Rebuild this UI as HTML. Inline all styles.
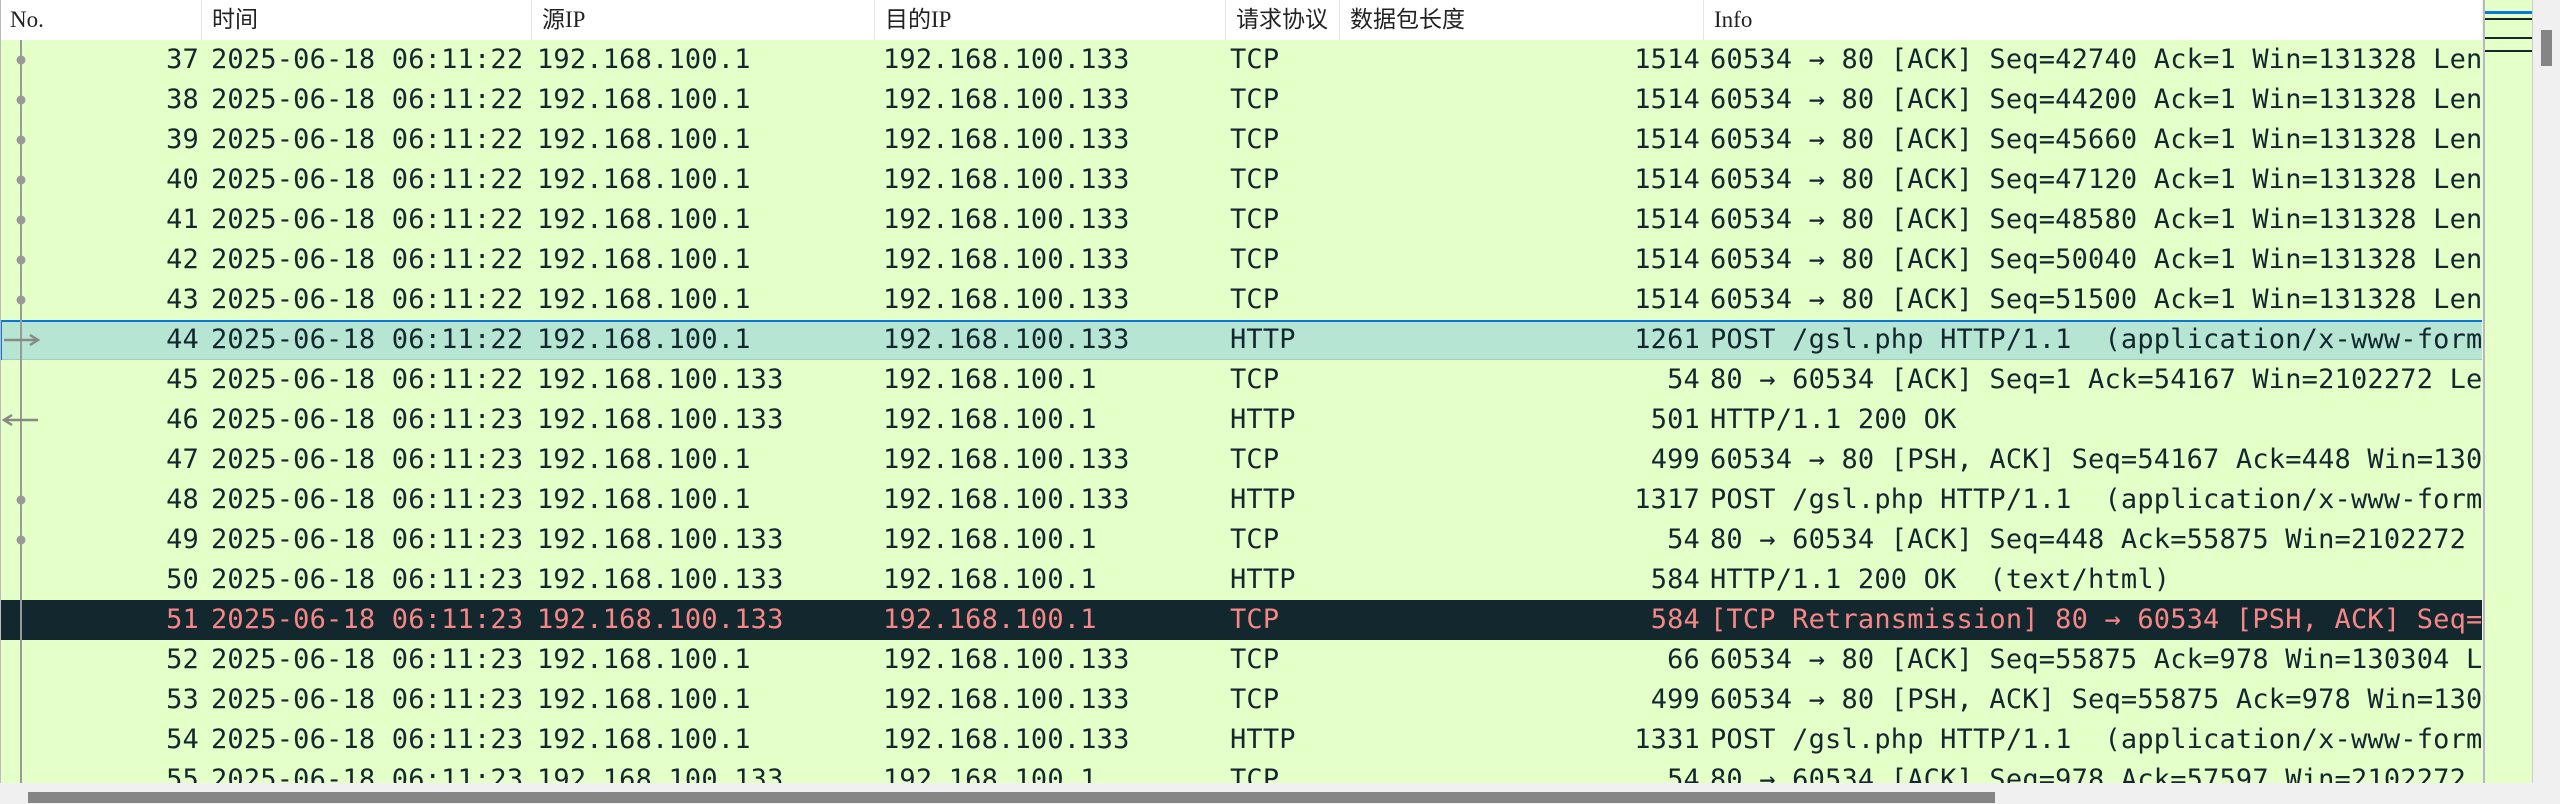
<!DOCTYPE html>
<html><head><meta charset="utf-8">
<style>
body{margin:0;width:2560px;height:804px;overflow:hidden;background:#f0f0f0;position:relative;font-family:"DejaVu Sans Mono","Liberation Mono",monospace;}
#hdr{position:absolute;left:0;top:0;width:2482px;height:40px;background:#fff;font-family:"Liberation Serif","Noto Sans CJK SC",serif;font-size:23px;color:#222;}
#hdr div{position:absolute;top:0;height:40px;line-height:40px;padding-left:10px;box-sizing:border-box;border-left:1px solid #e5e5e5;}
#tbl{position:absolute;left:0;top:40px;width:2482px;height:743px;overflow:hidden;background:#e4ffc7;}
.r{position:absolute;left:0;width:2482px;height:40px;line-height:40px;font-size:27px;letter-spacing:0.18px;color:#12272e;white-space:pre;}
.r span{position:absolute;top:0;white-space:pre;}
.sel{background:#b6e6d3;box-shadow:inset 0 2px 0 #0a78d7,inset 2px 0 0 #0a78d7,inset 0 -1px 0 #9ccfc0;}
.dk{background:#12272e;color:#f78787;}
#ov{position:absolute;left:2483px;top:0;width:48px;height:783px;background:#e4ffc7;border-left:2px solid #b8b8b8;}
#vs{position:absolute;left:2532px;top:0;width:28px;height:783px;background:#f0f0f0;border-left:1px solid #ccc;}
#hs{position:absolute;left:28px;top:792px;width:1967px;height:11px;background:#858585;}
</style></head><body>
<div id="hdr">
<div style="left:0;width:201px;border:none">No.</div>
<div style="left:201px;width:330px">时间</div>
<div style="left:531px;width:343px">源IP</div>
<div style="left:874px;width:351px">目的IP</div>
<div style="left:1225px;width:114px">请求协议</div>
<div style="left:1339px;width:364px">数据包长度</div>
<div style="left:1703px;width:779px">Info</div>
</div>
<div id="tbl">
<svg width="60" height="743" style="position:absolute;left:0;top:0;z-index:2">
<line x1="21" y1="0" x2="21" y2="743" stroke="#999" stroke-width="2"/>
<g fill="#999"><circle cx="21" cy="20" r="4.5"/><circle cx="21" cy="60" r="4.5"/><circle cx="21" cy="100" r="4.5"/><circle cx="21" cy="140" r="4.5"/><circle cx="21" cy="180" r="4.5"/><circle cx="21" cy="220" r="4.5"/><circle cx="21" cy="260" r="4.5"/><circle cx="21" cy="460" r="4.5"/><circle cx="21" cy="500" r="4.5"/></g>
<path d="M4 300H36M30 295L38 300L30 305" stroke="#888" stroke-width="2.5" fill="none"/>
<path d="M5 380H38M12 375L4 380L12 385" stroke="#888" stroke-width="2.5" fill="none"/>
</svg>
<div id="rows"></div>
</div>
<div id="ov">
<div style="position:absolute;left:0;top:11px;width:48px;height:3px;background:#0a78d7"></div>
<div style="position:absolute;left:0;top:18px;width:48px;height:2px;background:#12272e"></div>
<div style="position:absolute;left:0;top:37px;width:48px;height:2px;background:#12272e"></div>
<div style="position:absolute;left:0;top:50px;width:48px;height:2px;background:#12272e"></div>
</div>
<div id="vs"><div style="position:absolute;left:8px;top:30px;width:11px;height:36px;background:#858585"></div></div>
<div id="hs"></div>
<div style="position:absolute;left:0;top:0;width:2482px;height:783px;border-left:1px solid #bbb;box-sizing:border-box;pointer-events:none"></div>
<script>
var d=[
[37,"22","192.168.100.1","192.168.100.133","TCP",1514,"60534 → 80 [ACK] Seq=42740 Ack=1 Win=131328 Len"],
[38,"22","192.168.100.1","192.168.100.133","TCP",1514,"60534 → 80 [ACK] Seq=44200 Ack=1 Win=131328 Len"],
[39,"22","192.168.100.1","192.168.100.133","TCP",1514,"60534 → 80 [ACK] Seq=45660 Ack=1 Win=131328 Len"],
[40,"22","192.168.100.1","192.168.100.133","TCP",1514,"60534 → 80 [ACK] Seq=47120 Ack=1 Win=131328 Len"],
[41,"22","192.168.100.1","192.168.100.133","TCP",1514,"60534 → 80 [ACK] Seq=48580 Ack=1 Win=131328 Len"],
[42,"22","192.168.100.1","192.168.100.133","TCP",1514,"60534 → 80 [ACK] Seq=50040 Ack=1 Win=131328 Len"],
[43,"22","192.168.100.1","192.168.100.133","TCP",1514,"60534 → 80 [ACK] Seq=51500 Ack=1 Win=131328 Len"],
[44,"22","192.168.100.1","192.168.100.133","HTTP",1261,"POST /gsl.php HTTP/1.1  (application/x-www-form"],
[45,"22","192.168.100.133","192.168.100.1","TCP",54,"80 → 60534 [ACK] Seq=1 Ack=54167 Win=2102272 Le"],
[46,"23","192.168.100.133","192.168.100.1","HTTP",501,"HTTP/1.1 200 OK"],
[47,"23","192.168.100.1","192.168.100.133","TCP",499,"60534 → 80 [PSH, ACK] Seq=54167 Ack=448 Win=130"],
[48,"23","192.168.100.1","192.168.100.133","HTTP",1317,"POST /gsl.php HTTP/1.1  (application/x-www-form"],
[49,"23","192.168.100.133","192.168.100.1","TCP",54,"80 → 60534 [ACK] Seq=448 Ack=55875 Win=2102272"],
[50,"23","192.168.100.133","192.168.100.1","HTTP",584,"HTTP/1.1 200 OK  (text/html)"],
[51,"23","192.168.100.133","192.168.100.1","TCP",584,"[TCP Retransmission] 80 → 60534 [PSH, ACK] Seq="],
[52,"23","192.168.100.1","192.168.100.133","TCP",66,"60534 → 80 [ACK] Seq=55875 Ack=978 Win=130304 L"],
[53,"23","192.168.100.1","192.168.100.133","TCP",499,"60534 → 80 [PSH, ACK] Seq=55875 Ack=978 Win=130"],
[54,"23","192.168.100.1","192.168.100.133","HTTP",1331,"POST /gsl.php HTTP/1.1  (application/x-www-form"],
[55,"23","192.168.100.133","192.168.100.1","TCP",54,"80 → 60534 [ACK] Seq=978 Ack=57597 Win=2102272"]];
var h="";
d.forEach(function(r,i){
var c=r[0]==44?" sel":r[0]==51?" dk":"";
h+='<div class="r'+c+'" style="top:'+(i*40)+'px">'+
'<span style="left:0;width:199px;text-align:right">'+r[0]+'</span>'+
'<span style="left:211px">2025-06-18 06:11:'+r[1]+'</span>'+
'<span style="left:537px">'+r[2]+'</span>'+
'<span style="left:883px">'+r[3]+'</span>'+
'<span style="left:1230px">'+r[4]+'</span>'+
'<span style="left:1339px;width:361px;text-align:right">'+r[5]+'</span>'+
'<span style="left:1710px">'+r[6]+'</span></div>';});
document.getElementById("rows").innerHTML=h;
</script>
</body></html>
